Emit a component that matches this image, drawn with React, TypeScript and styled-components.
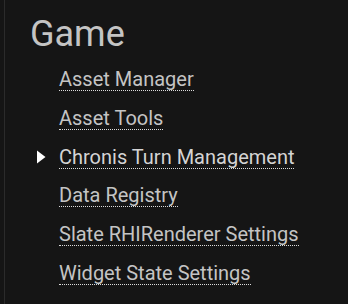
import React from "react";
import styled, { createGlobalStyle } from "styled-components";

const GlobalStyle = createGlobalStyle`
  html, body {
    margin: 0;
    padding: 0;
    background: #151515;
  }
  body {
    font-family: Roboto, "Noto Sans", "Liberation Sans", sans-serif;
  }
`;

// ====== Styled Components ======
const Panel = styled.div`
  width: 348px;
  height: 304px;
  box-sizing: border-box;
  background: #151515;
  border-left: 1px solid #2b2b2b;
  margin-left: 4px;
  padding: 13px 0 0 25px;
  overflow: hidden;
`;

const Title = styled.h1`
  margin: 0 0 12px 0;
  font-size: 36px;
  font-weight: 400;
  line-height: 42px;
  color: #c4c4c4;
`;

const List = styled.ul`
  list-style: none;
  margin: 0;
  padding: 0;
  display: flex;
  flex-direction: column;
  gap: 13.8px;
`;

const Row = styled.li`
  display: flex;
  align-items: center;
  height: 25px;
`;

const Marker = styled.span`
  width: 29px;
  display: flex;
  align-items: center;
  padding-left: 6px;
  box-sizing: border-box;
`;

const Link = styled.a<{ $active?: boolean }>`
  font-size: 20px;
  line-height: 22px;
  color: ${({ $active }) => ($active ? "#d4d4d4" : "#c4c4c4")};
  text-decoration: none;
  border-bottom: 1px dotted #dcdcdc;
  cursor: pointer;
  white-space: nowrap;
`;

const Arrow = () => (
  <svg width="10" height="14" viewBox="0 0 10 14">
    <path d="M1 0.5 L9.5 7 L1 13.5 Z" fill="#ffffff" />
  </svg>
);

const items = [
  "Asset Manager",
  "Asset Tools",
  "Chronis Turn Management",
  "Data Registry",
  "Slate RHIRenderer Settings",
  "Widget State Settings",
];

const App: React.FC = () => {
  const active = "Chronis Turn Management";
  return (
    <>
      <GlobalStyle />
      <Panel>
        <Title>Game</Title>
        <List>
          {items.map((name) => (
            <Row key={name}>
              <Marker>{name === active && <Arrow />}</Marker>
              <Link $active={name === active}>{name}</Link>
            </Row>
          ))}
        </List>
      </Panel>
    </>
  );
};

export default App;
